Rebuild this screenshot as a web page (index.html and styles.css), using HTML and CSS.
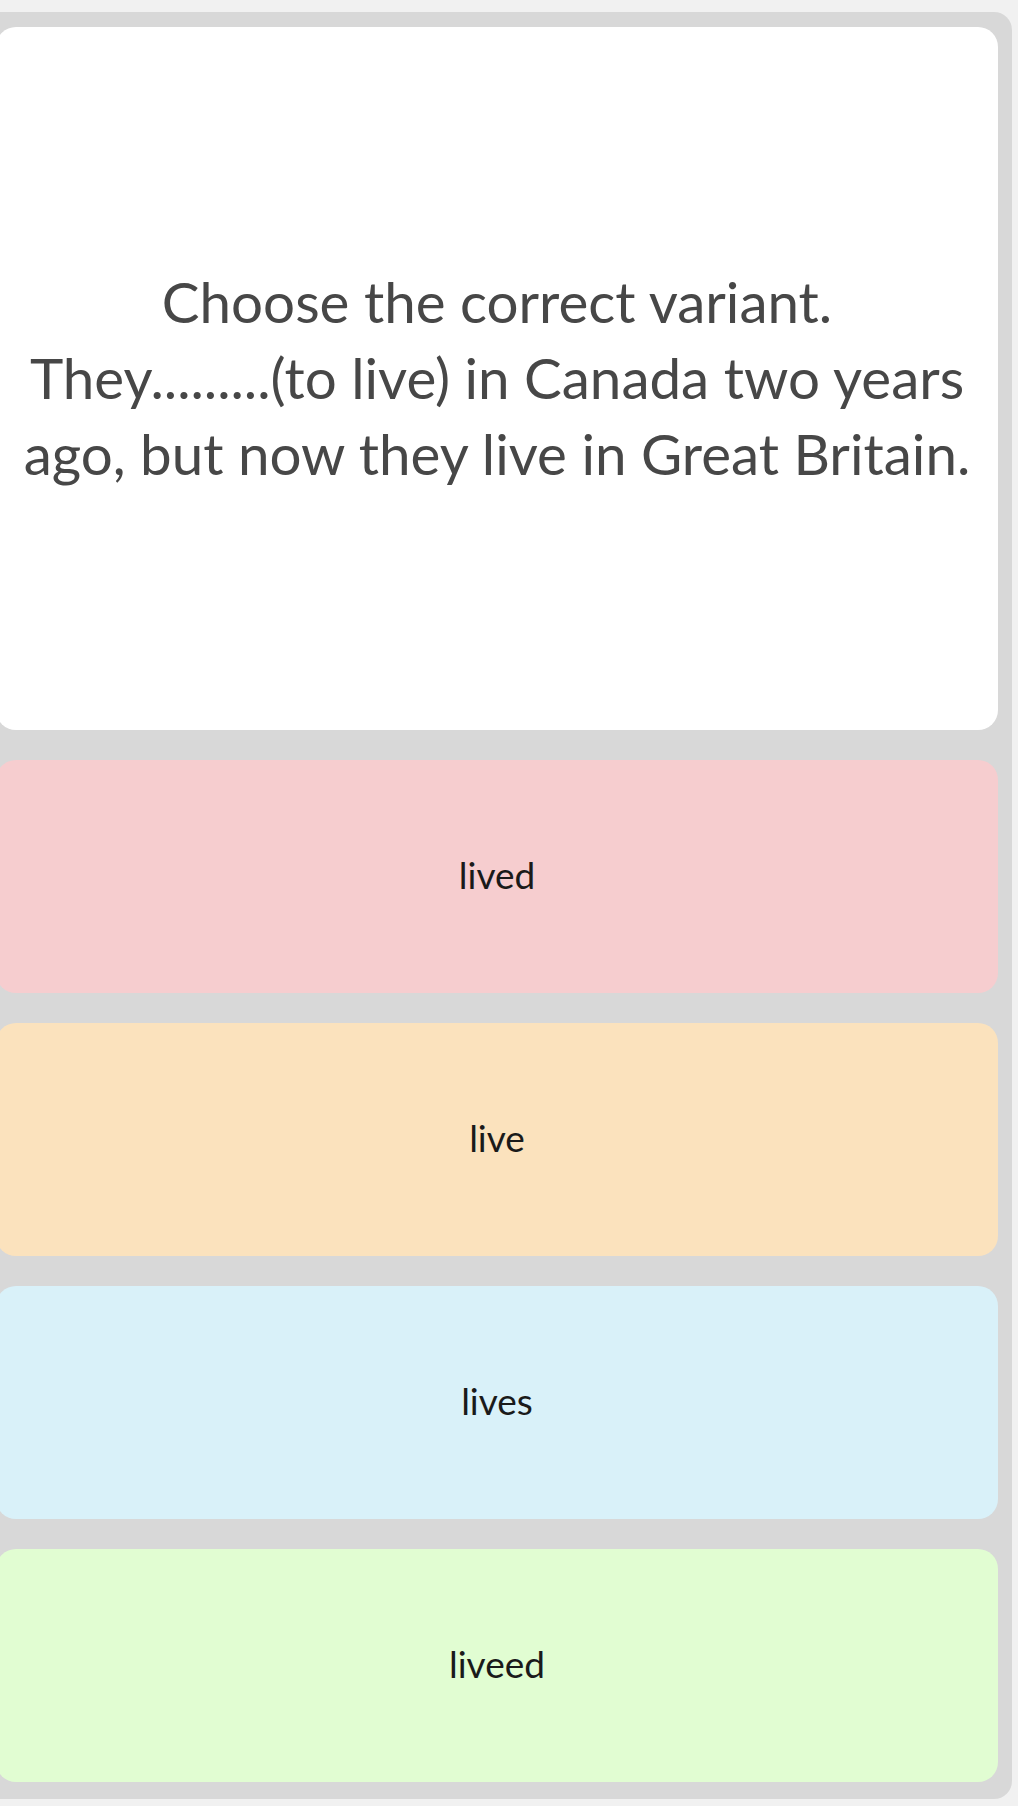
FILE: index.html
```html
<!DOCTYPE html>
<html>
<head>
<meta charset="utf-8">
<link rel="stylesheet" href="styles.css">
</head>
<body>
<div class="panel">
  <div class="question">
    <p>Choose the correct variant.<br>They.........(to live) in Canada two years ago, but now they live in Great Britain.</p>
  </div>
  <div class="option pink">lived</div>
  <div class="option orange">live</div>
  <div class="option blue">lives</div>
  <div class="option green">liveed</div>
</div>
</body>
</html>
```
FILE: styles.css
```css
html, body {
  margin: 0;
  padding: 0;
  background: #f1f1f1;
}
body {
  padding: 12px 6px 7px 0;
  font-family: Lato, "Noto Sans", sans-serif;
}
.panel {
  margin-left: -18px;
  background: #d8d8d8;
  border-radius: 18px;
  padding: 15px 14px 17px 14px;
  display: flex;
  flex-direction: column;
  gap: 30px;
}
.question {
  background: #ffffff;
  border-radius: 20px;
  height: 703px;
  box-sizing: border-box;
  padding-bottom: 4px;
  display: flex;
  align-items: center;
  justify-content: center;
  text-align: center;
}
.question p {
  margin: 0;
  padding: 0 10px;
  font-size: 56.5px;
  line-height: 76px;
  color: #474747;
}
.option {
  height: 233px;
  box-sizing: border-box;
  padding-bottom: 4px;
  border-radius: 20px;
  display: flex;
  align-items: center;
  justify-content: center;
  font-size: 37px;
  color: #1a1a1a;
}
.pink { background: #f6cdcf; }
.orange { background: #fbe2bd; }
.blue { background: #d9f1f9; }
.green { background: #e1fdd2; }
```
